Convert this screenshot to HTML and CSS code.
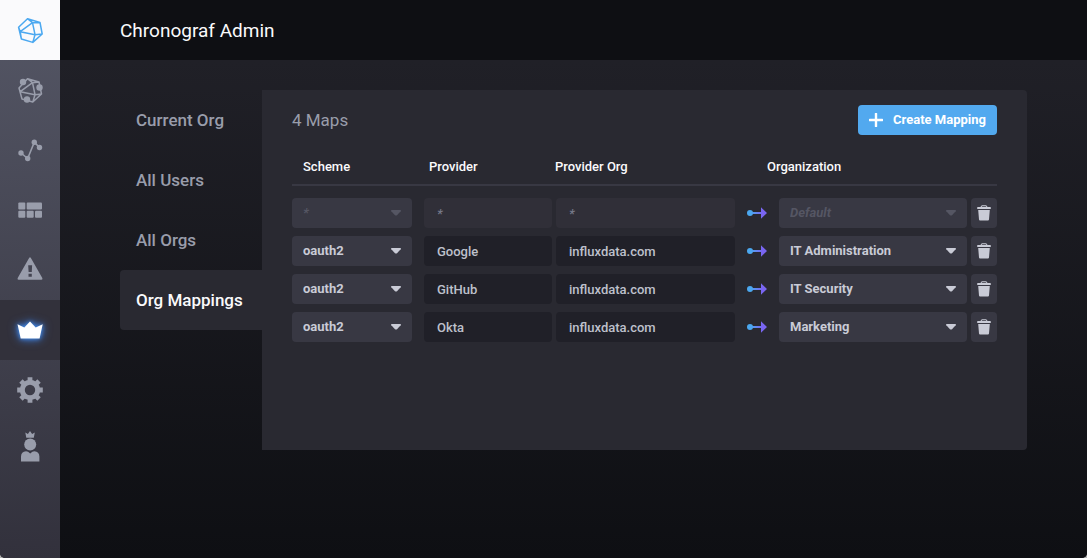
FILE: index.html
```html
<!DOCTYPE html>
<html lang="en">
<head>
<meta charset="utf-8">
<meta name="viewport" content="width=device-width, initial-scale=1">
<title>Chronograf Admin</title>
<link rel="stylesheet" href="styles.css">
</head>
<body>
<svg class="sprite" aria-hidden="true">
  <defs>
    <linearGradient id="arrow-fade" gradientUnits="userSpaceOnUse" x1="0" y1="0" x2="20" y2="0">
      <stop offset="0.2" stop-color="#4ba8f0"/><stop offset="0.75" stop-color="#7a65f2"/>
    </linearGradient>
    <symbol id="caret" viewBox="0 0 10 6"><path d="M0.6 0H9.4Q10.3 0.3 9.7 1.2L6 5.2Q5 6 4 5.2L0.3 1.2Q-0.3 0.3 0.6 0Z" fill="currentColor"/></symbol>
    <symbol id="trash" viewBox="0 0 14 16"><path d="M0.6 2H3.5Q4 0.3 5.2 0.3H8.8Q10 0.3 10.5 2H13.4Q13.8 2 13.8 2.6V4H0.2V2.6Q0.2 2 0.6 2ZM4.6 2H9.4Q9.2 1.3 8.6 1.3H5.4Q4.8 1.3 4.6 2ZM1.2 5H12.8L12 14.4Q11.9 15.4 11 15.4H3Q2.1 15.4 2 14.4Z" fill="currentColor" fill-rule="evenodd"/></symbol>
    <symbol id="map-arrow" viewBox="0 0 20 12"><circle cx="3" cy="6" r="3" fill="#4ba8f0"/><path d="M4 5H14V0.3L20 6L14 11.7V7H4Z" fill="url(#arrow-fade)"/></symbol>
  </defs>
</svg>
<div class="app">
  <nav class="sidebar" aria-label="Main">
    <a class="sidebar-item logo" href="#" aria-label="Home"><svg viewBox="0 0 28 28" fill="none" stroke="currentColor" stroke-width="1.5" stroke-linejoin="round"><path d="M11.5 2.7L24 6.5L26.2 18L16.8 26.4L5.4 23L2.6 11.3ZM11.5 2.7L16.5 6.7L24 6.5M16.5 6.7L4.2 15.7L19 18.7ZM19 18.7L26.2 18M19 18.7L16.8 26.4M2.6 11.3L4.2 15.7L5.4 23"/></svg></a>
    <a class="sidebar-item" href="#" aria-label="Host List"><svg viewBox="0 0 28 28" fill="none" stroke="currentColor" stroke-width="1.5" stroke-linejoin="round"><path d="M11.5 2.7L23 6L25.5 18L16.8 26L6 23L3 12ZM11.5 2.7L16.5 6.7L23 6M16.5 6.7L4.2 15.7L19 18.7ZM19 18.7L25.5 18M19 18.7L16.8 26"/><g fill="currentColor" stroke="none"><circle cx="7" cy="6" r="3.2"/><circle cx="23.5" cy="11.5" r="3.2"/><circle cx="11" cy="23.5" r="3.2"/></g></svg></a>
    <a class="sidebar-item" href="#" aria-label="Explore"><svg viewBox="0 0 28 28" fill="currentColor"><path d="M5 17L11.7 22.5L18.3 6.2L23.5 11.5" fill="none" stroke="currentColor" stroke-width="1.6"/><circle cx="5" cy="17" r="2.7"/><circle cx="11.7" cy="22.5" r="2.7"/><circle cx="18.3" cy="6.2" r="2.7"/><circle cx="23.5" cy="11.5" r="2.7"/></svg></a>
    <a class="sidebar-item" href="#" aria-label="Dashboards"><svg viewBox="0 0 28 28" fill="currentColor"><rect x="2.3" y="6.5" width="7" height="7" rx="1"/><rect x="10.7" y="6.5" width="15.3" height="7" rx="1"/><rect x="2.3" y="14.8" width="7" height="7" rx="1"/><rect x="10.7" y="14.8" width="7" height="7" rx="1"/><rect x="19" y="14.8" width="7" height="7" rx="1"/></svg></a>
    <a class="sidebar-item" href="#" aria-label="Alerting"><svg viewBox="0 0 28 28" fill="currentColor" fill-rule="evenodd"><path d="M13.1 2Q14 0.6 14.9 2L26.3 22Q27 23.7 25.5 23.8H2.5Q1 23.7 1.7 22ZM12.2 9.3L12.6 16H15.8L16.1 9.3ZM12.5 17.7V20.8H15.8V17.7Z"/></svg></a>
    <a class="sidebar-item active" href="#" aria-label="Admin" aria-current="page"><svg viewBox="0 0 28 28" fill="currentColor"><path d="M1.5 8.3L8.3 11.5L14 5.5L19.7 11.5L26.7 8.3L23.6 22.6H4.7Z"/></svg></a>
    <a class="sidebar-item" href="#" aria-label="Configuration"><svg viewBox="0 0 28 28"><g fill="currentColor"><path d="M11.6 1.2H16.4V6H11.6ZM11.6 22H16.4V26.8H11.6ZM1.2 11.6H6V16.4H1.2ZM22 11.6H26.8V16.4H22Z"/><path transform="rotate(45 14 14)" d="M11.6 1.2H16.4V6H11.6ZM11.6 22H16.4V26.8H11.6ZM1.2 11.6H6V16.4H1.2ZM22 11.6H26.8V16.4H22Z"/></g><circle cx="14" cy="14" r="7.7" fill="none" stroke="currentColor" stroke-width="5"/></svg></a>
    <a class="sidebar-item" href="#" aria-label="User"><svg class="user-icon" viewBox="0 0 28 36" fill="currentColor"><path d="M9.3 4.6L11.9 6L14 3L16.1 6L18.8 4.6L17.8 9.8H10.3Z"/><circle cx="14.2" cy="16.5" r="6"/><path d="M5 33.4V28.5Q5.2 23.4 10 23.2Q12 23.3 14.2 25.5Q16.4 23.3 18.4 23.2Q23.2 23.4 23.4 28.5V33.4Z"/></svg></a>
  </nav>
  <div class="page">
    <header class="page-header"><h1>Chronograf Admin</h1></header>
    <main class="content">
      <nav class="tabs" aria-label="Admin sections">
        <a href="#">Current Org</a>
        <a href="#">All Users</a>
        <a href="#">All Orgs</a>
        <a class="active" href="#" aria-current="page">Org Mappings</a>
      </nav>
      <section class="panel">
        <div class="panel-heading">
          <h2>4 Maps</h2>
          <button class="create" type="button"><svg viewBox="0 0 14 14" aria-hidden="true"><path d="M7 0.8V13.2M0.8 7H13.2" stroke="currentColor" stroke-width="2.4" stroke-linecap="round"/></svg><span>Create Mapping</span></button>
        </div>
        <table class="mappings">
          <colgroup><col class="col-scheme"><col class="col-provider"><col class="col-provider-org"><col class="col-arrow"><col><col class="col-delete"></colgroup>
          <thead>
            <tr><th class="th-scheme">Scheme</th><th class="th-provider">Provider</th><th class="th-provider-org">Provider Org</th><th class="th-organization" colspan="3">Organization</th></tr>
          </thead>
          <tbody>
            <tr>
              <td><div class="dropdown"><select aria-label="Scheme" disabled><option>*</option></select><svg aria-hidden="true"><use href="#caret"/></svg></div></td>
              <td><input type="text" aria-label="Provider" value="*" disabled></td>
              <td><input type="text" aria-label="Provider Org" value="*" disabled></td>
              <td><svg class="arrow" aria-hidden="true"><use href="#map-arrow"/></svg></td>
              <td><div class="dropdown"><select aria-label="Organization" disabled><option>Default</option></select><svg aria-hidden="true"><use href="#caret"/></svg></div></td>
              <td><button class="delete" type="button" aria-label="Delete mapping"><svg><use href="#trash"/></svg></button></td>
            </tr>
            <tr>
              <td><div class="dropdown"><select aria-label="Scheme"><option>oauth2</option></select><svg aria-hidden="true"><use href="#caret"/></svg></div></td>
              <td><input type="text" aria-label="Provider" value="Google"></td>
              <td><input type="text" aria-label="Provider Org" value="influxdata.com"></td>
              <td><svg class="arrow" aria-hidden="true"><use href="#map-arrow"/></svg></td>
              <td><div class="dropdown"><select aria-label="Organization"><option>IT Administration</option></select><svg aria-hidden="true"><use href="#caret"/></svg></div></td>
              <td><button class="delete" type="button" aria-label="Delete mapping"><svg><use href="#trash"/></svg></button></td>
            </tr>
            <tr>
              <td><div class="dropdown"><select aria-label="Scheme"><option>oauth2</option></select><svg aria-hidden="true"><use href="#caret"/></svg></div></td>
              <td><input type="text" aria-label="Provider" value="GitHub"></td>
              <td><input type="text" aria-label="Provider Org" value="influxdata.com"></td>
              <td><svg class="arrow" aria-hidden="true"><use href="#map-arrow"/></svg></td>
              <td><div class="dropdown"><select aria-label="Organization"><option>IT Security</option></select><svg aria-hidden="true"><use href="#caret"/></svg></div></td>
              <td><button class="delete" type="button" aria-label="Delete mapping"><svg><use href="#trash"/></svg></button></td>
            </tr>
            <tr>
              <td><div class="dropdown"><select aria-label="Scheme"><option>oauth2</option></select><svg aria-hidden="true"><use href="#caret"/></svg></div></td>
              <td><input type="text" aria-label="Provider" value="Okta"></td>
              <td><input type="text" aria-label="Provider Org" value="influxdata.com"></td>
              <td><svg class="arrow" aria-hidden="true"><use href="#map-arrow"/></svg></td>
              <td><div class="dropdown"><select aria-label="Organization"><option>Marketing</option></select><svg aria-hidden="true"><use href="#caret"/></svg></div></td>
              <td><button class="delete" type="button" aria-label="Delete mapping"><svg><use href="#trash"/></svg></button></td>
            </tr>
          </tbody>
        </table>
      </section>
    </main>
  </div>
</div>
</body>
</html>
```

FILE: styles.css
```css
* { box-sizing: border-box; }

html { background: #b5b5b5; }

body {
  margin: 0;
  font-family: Roboto, "Liberation Sans", sans-serif;
  font-size: 13px;
  color: #fafafc;
}

a { color: inherit; text-decoration: none; }

h1, h2 { margin: 0; font-weight: 400; }

svg { display: block; }

.sprite { position: absolute; width: 0; height: 0; }

.app {
  display: flex;
  min-height: 100vh;
  overflow: hidden;
  border-radius: 0 0 5px 5px;
  background: #0f1014;
}

/* Sidebar */
.sidebar {
  flex: none;
  width: 60px;
  background: linear-gradient(#555766, #32313c);
  color: #999dab;
}

.sidebar-item {
  display: flex;
  align-items: center;
  justify-content: center;
  height: 60px;
}

.sidebar-item svg { width: 28px; height: 28px; }
.sidebar-item .user-icon { height: 36px; margin-bottom: 8px; }
.sidebar-item.logo { background: #fafafc; color: #4ba8f0; }
.sidebar-item.active { background: #32313b; color: #fff; }
.sidebar-item.active svg {
  overflow: visible;
  filter: drop-shadow(0 0 2px #4591ed) drop-shadow(0 0 4px #3b78dc);
}

/* Page */
.page {
  display: flex;
  flex: 1;
  flex-direction: column;
  min-width: 0;
}

.page-header {
  display: flex;
  align-items: center;
  height: 60px;
  padding: 0 60px;
  background: #0e0f13;
}

.page-header h1 { font-size: 19px; }

.content {
  display: flex;
  flex: 1;
  align-items: flex-start;
  padding: 30px 60px;
  background: linear-gradient(#202027, #0e0f13);
}

.tabs {
  flex: none;
  width: 142px;
  color: #999dab;
  font-size: 17px;
  font-weight: 500;
}

.tabs a {
  display: flex;
  align-items: center;
  height: 60px;
  padding-left: 16px;
  border-radius: 4px 0 0 4px;
  white-space: nowrap;
}

.tabs .active { background: #292931; color: #fafafc; }

.panel {
  flex: 1;
  min-width: 0;
  min-height: 360px;
  padding: 0 30px 30px;
  border-radius: 0 4px 4px 0;
  background: #292931;
}

.panel-heading {
  display: flex;
  align-items: center;
  justify-content: space-between;
  height: 60px;
}

.panel-heading h2 { color: #999dab; font-size: 17px; }

button, select, input {
  height: 30px;
  border: 0;
  border-radius: 4px;
  font-family: inherit;
  font-size: 13px;
}

.create {
  display: flex;
  align-items: center;
  gap: 10px;
  padding: 0 11px;
  background: #52a9ef;
  color: #fff;
  font-weight: 700;
}

.create svg { width: 14px; height: 14px; }
.create span { padding-bottom: 2px; }

/* Mapping table */
.mappings {
  width: 100%;
  table-layout: fixed;
  border-collapse: separate;
  border-spacing: 0;
}

.col-scheme { width: 132px; }
.col-provider { width: 128px; }
.col-provider-org { width: 183px; }
.col-arrow { width: 44px; }
.col-delete { width: 30px; }

th {
  height: 36px;
  padding: 0 0 2px;
  border-bottom: 2px solid #383843;
  font-weight: 500;
  text-align: left;
}

.th-scheme { padding-left: 11px; }
.th-provider { padding-left: 5px; }
.th-provider-org { padding-left: 3px; }
.th-organization { padding-left: 32px; }

td { padding: 4px 0; vertical-align: middle; }
td:first-child { padding-right: 12px; }
td:nth-child(3), td:last-child { padding-left: 4px; }
tbody tr:first-child td { padding-top: 12px; }

.dropdown { display: grid; align-items: center; }

.dropdown select, .dropdown svg { grid-area: 1 / 1; }

.dropdown select {
  width: 100%;
  padding: 0 30px 2px 11px;
  appearance: none;
  background: #383843;
  color: #c9cbd6;
  font-weight: 700;
}

.dropdown svg {
  justify-self: end;
  width: 10px;
  height: 6px;
  margin-right: 11px;
  color: #c9cbd6;
  pointer-events: none;
}

.dropdown select:disabled { color: #555663; font-style: italic; opacity: 1; }
.dropdown select:disabled + svg { color: #555663; }

input {
  display: block;
  width: 100%;
  padding: 0 13px;
  background: #202028;
  color: #bec0cc;
  font-weight: 500;
}

input:disabled { background: #302f38; color: #757888; font-style: italic; }

.arrow { width: 20px; height: 12px; margin: 0 auto; }

.delete {
  display: flex;
  align-items: center;
  justify-content: center;
  width: 26px;
  padding: 0;
  background: #383843;
  color: #c9cbd6;
}

.delete svg { width: 14px; height: 16px; }
```
